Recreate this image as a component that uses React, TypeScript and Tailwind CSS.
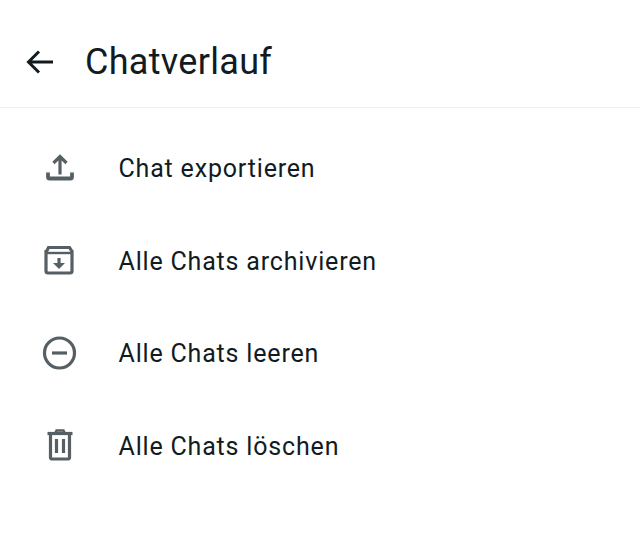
import React from "react";

const C = "#555f64";
const Upload = () => (
  <svg width="36" height="36" viewBox="0 0 36 36" fill="none" stroke={C} strokeWidth="3.200">
    <path d="M18 23.500V6.500M11.500 12l6.500-6.500 6.500 6.500" />
    <path d="M6 21.500v4.500a1.500 1.500 0 0 0 1.500 1.500h21a1.500 1.500 0 0 0 1.500-1.500v-4.500" strokeWidth="3.800" />
  </svg>
);
const Archive = () => (
  <svg width="36" height="36" viewBox="0 0 36 36" fill="none" stroke={C} strokeWidth="3.200">
    <path d="M4.500 8.500l2-4h21l2.500 4M4 7v21a2 2 0 0 0 2 2h22a2 2 0 0 0 2-2V7" />
    <path d="M4 10h26" strokeWidth="2.400" />
    <path d="M17 15v8" />
    <path d="M11 20l6 6 6-6z" fill={C} stroke="none" />
  </svg>
);
const Clear = () => (
  <svg width="36" height="36" viewBox="0 0 36 36" fill="none" stroke={C} strokeWidth="3.200">
    <circle cx="17.500" cy="17" r="15" />
    <path d="M10 17h15" />
  </svg>
);
const Trash = () => (
  <svg width="36" height="36" viewBox="0 0 36 36" fill="none" stroke={C} strokeWidth="3.200">
    <path d="M5.500 5.500h25" />
    <path d="M13.500 4.500l1-2h7l1 2" strokeWidth="2.400" />
    <path d="M8.500 6v23.500a1.500 1.500 0 0 0 1.500 1.500h16a1.500 1.500 0 0 0 1.500-1.500V6" />
    <path d="M14.500 11v14M21.500 11v14" />
  </svg>
);

const rows = [
  { label: "Chat exportieren", icon: <Upload /> },
  { label: "Alle Chats archivieren", icon: <Archive /> },
  { label: "Alle Chats leeren", icon: <Clear /> },
  { label: "Alle Chats löschen", icon: <Trash /> },
];

export default function App() {
  return (
    <div className="w-[640px] h-[535px] bg-white overflow-hidden font-['Roboto',sans-serif] text-[#111b21]">
      <header className="h-[108px] pt-[16px] flex items-center border-b border-[#f0f1f1]">
        <svg className="ml-[24px]" width="32" height="32" viewBox="0 0 32 32" fill="none" stroke="#111b21" strokeWidth="3">
          <path d="M29 16H5M15 5.500L4.500 16 15 26.500" />
        </svg>
        <h1 className="ml-[29px] text-[36px] tracking-[0.3px] leading-none font-normal">Chatverlauf</h1>
      </header>
      <ul className="pt-[14.400px]">
        {rows.map((r) => (
          <li key={r.label} className="h-[92.600px] flex items-center">
            <span className="ml-[41.500px] w-[36px] h-[36px] shrink-0">{r.icon}</span>
            <span className="ml-[41px] text-[25px] tracking-[0.82px] leading-none">{r.label}</span>
          </li>
        ))}
      </ul>
    </div>
  );
}
